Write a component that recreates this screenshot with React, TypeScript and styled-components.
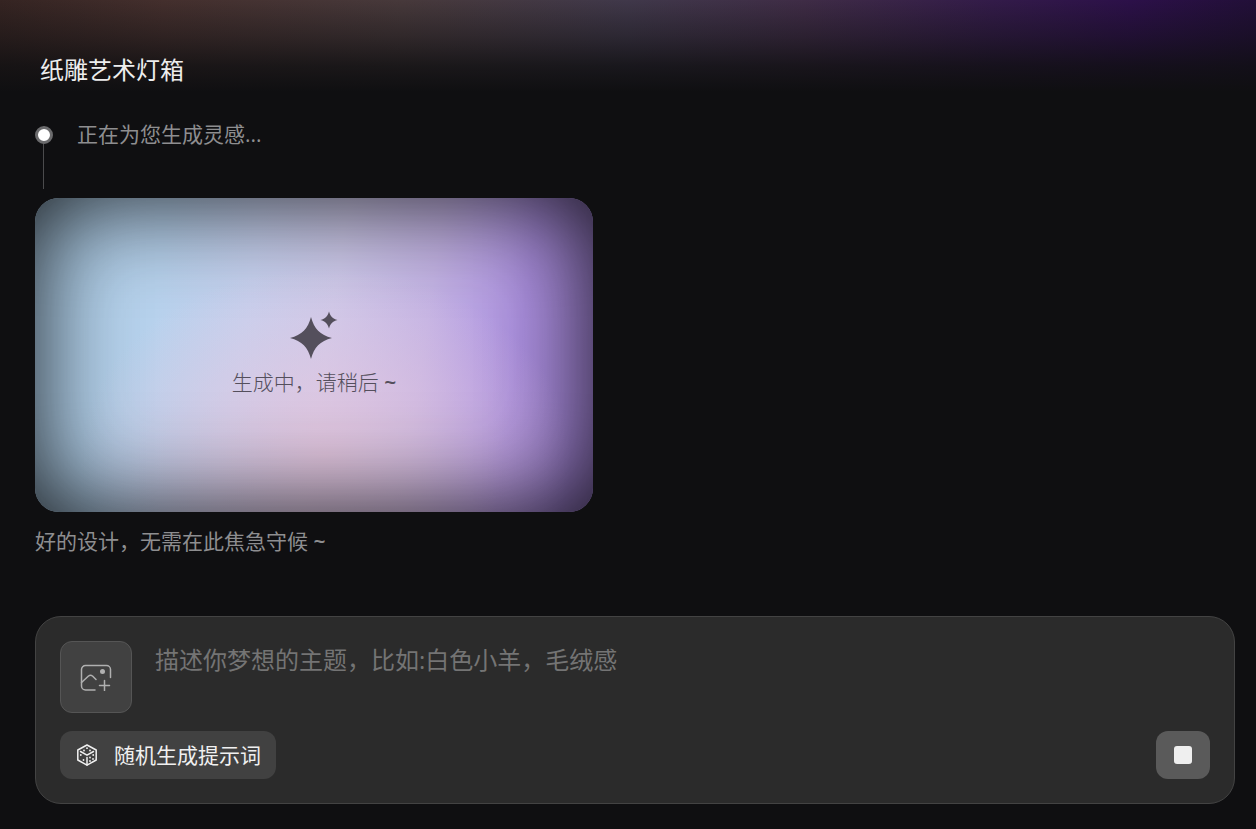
import React from "react";
import styled, { createGlobalStyle } from "styled-components";

const GlobalStyle = createGlobalStyle`
  *, *::before, *::after { box-sizing: border-box; }
  body {
    margin: 0;
    background: #0f0f11;
    font-family: "Open Sans", "Noto Sans CJK SC", sans-serif;
  }
  button, textarea { font-family: inherit; }
`;

const Page = styled.main`
  display: flex;
  flex-direction: column;
  min-height: 100vh;
  padding: 50px 21px 25px 35px;
  background:
    linear-gradient(to bottom, rgba(15, 15, 17, 0) 0, rgba(15, 15, 17, 0.4) 36px, rgba(15, 15, 17, 0.8) 66px, #0f0f11 92px),
    linear-gradient(to right, #352422 0%, #442f2d 13%, #47393b 32%, #40384a 50%, #3f2c46 64%, #331b49 79%, #2c1049 90%, #220f38 100%);
`;

const Title = styled.h1`
  margin: 0;
  padding-left: 5px;
  font-size: 24px;
  line-height: 40px;
  font-weight: 400;
  color: #ededed;
`;

const Status = styled.div`
  display: grid;
  grid-template-columns: 18px 1fr;
  column-gap: 24px;
  margin-top: 28px;
`;

const Track = styled.div`
  display: flex;
  flex-direction: column;
  padding-top: 8px;
`;

const Dot = styled.span`
  width: 18px;
  height: 18px;
  flex: none;
  border: 3px solid #6b6b6d;
  border-radius: 50%;
  background: #fff;
`;

const Line = styled.span`
  width: 1px;
  height: 45px;
  margin-left: 8px;
  background: #4b4b4d;
`;

const Note = styled.p`
  margin: 0;
  font-size: 21px;
  line-height: 32px;
  color: #8e8e90;
`;

const Preview = styled.section`
  display: flex;
  flex-direction: column;
  align-items: center;
  gap: 6px;
  width: 100%;
  max-width: 558px;
  height: 314px;
  margin: 9px 0 13px;
  padding-top: 112px;
  border-radius: 24px;
  color: #544f5c;
  background:
    radial-gradient(ellipse 44% 60% at 52% 82%, rgba(228, 198, 222, 0.9), rgba(226, 202, 228, 0) 100%),
    linear-gradient(98deg, #b2d2ec 8%, #b7d2ed 22%, #c6d0ee 38%, #cdc9ea 52%, #c3b3e4 68%, #ac90e0 84%, #a283d6 100%);
  box-shadow: inset 0 0 100px rgba(0, 0, 0, 0.9);
`;

const PreviewText = styled.p`
  margin: 0;
  font-size: 21px;
  line-height: 32px;
  font-weight: 300;
`;

const Tilde = styled.span`
  font-weight: 600;
`;

const Composer = styled.form`
  display: flex;
  flex-direction: column;
  gap: 18px;
  margin-top: 59px;
  padding: 24px;
  border: 1px solid #434343;
  border-radius: 26px;
  background: #2b2b2b;
`;

const Row = styled.div<{ $between?: boolean }>`
  display: flex;
  gap: 23px;
  justify-content: ${(p) => (p.$between ? "space-between" : "flex-start")};
`;

const UploadButton = styled.button`
  display: flex;
  align-items: center;
  justify-content: center;
  flex: none;
  width: 72px;
  height: 72px;
  padding: 0;
  border: 1px solid #555;
  border-radius: 12px;
  background: #414141;
  color: #b0b0b0;
`;

const Prompt = styled.textarea`
  flex: 1;
  height: 72px;
  padding: 0;
  border: 0;
  outline: 0;
  resize: none;
  background: transparent;
  color: #ededed;
  font-size: 24px;
  line-height: 38px;
  &::placeholder { color: #747474; opacity: 1; }
`;

const RandomButton = styled.button`
  display: flex;
  align-items: center;
  gap: 15px;
  height: 48px;
  padding: 0 15px;
  border: 0;
  border-radius: 12px;
  background: #414141;
  color: #f0f0f0;
  font-size: 21px;
  line-height: 32px;
`;

const StopButton = styled.button`
  display: flex;
  align-items: center;
  justify-content: center;
  width: 54px;
  height: 48px;
  padding: 0;
  border: 0;
  border-radius: 12px;
  background: #5a5a5a;
`;

const StopMark = styled.span`
  width: 18px;
  height: 18px;
  border-radius: 3px;
  background: #efefef;
`;

const Sparkles = () => (
  <svg width="50" height="50" viewBox="0 0 50 50" fill="currentColor" aria-hidden="true">
    <path d="M22 7C25 18.500 31 25 43 28C31 31 25 37.500 22 49C19 37.500 13 31 1 28C13 25 19 18.500 22 7Z" />
    <path d="M40 1.500C41.500 6.500 43.500 8.500 48.500 10C43.500 11.500 41.500 13.500 40 18.500C38.500 13.500 36.500 11.500 31.500 10C36.500 8.500 38.500 6.500 40 1.500Z" />
  </svg>
);

const ImagePlus = () => (
  <svg width="32" height="28" viewBox="0 0 32 28" fill="none" stroke="currentColor" strokeWidth="1.500" strokeLinecap="round" strokeLinejoin="round" aria-hidden="true">
    <path d="M15 27H5.500A4 4 0 0 1 1.500 23V6.500A4 4 0 0 1 5.500 2.500H26.500A4 4 0 0 1 30.500 6.500V14.500" />
    <path d="M1.500 19.500L8.500 13Q10.500 11.500 12.500 13L16 16.500" />
    <path d="M24.500 17.500V27.500M19.500 22.500H29.500" />
    <circle cx="22.500" cy="8.500" r="2.500" fill="currentColor" stroke="none" />
  </svg>
);

const Dice = () => (
  <svg width="24" height="24" viewBox="0 0 24 24" fill="none" stroke="currentColor" strokeWidth="1.500" strokeLinejoin="round" strokeLinecap="round" aria-hidden="true">
    <path d="M12 2L21.200 7V17L12 22.200L2.800 17V7Z" />
    <path d="M5.500 8.500L12 12.200L18.500 8.500M12 14.500V22" />
    <g fill="currentColor" stroke="none">
      <circle cx="12" cy="5.200" r="0.900" />
      <circle cx="9" cy="7.500" r="0.900" />
      <circle cx="15" cy="7.500" r="0.900" />
      <circle cx="5.800" cy="12" r="0.900" />
      <circle cx="8.500" cy="17" r="0.900" />
      <circle cx="18.200" cy="12" r="0.900" />
      <circle cx="15" cy="14.500" r="0.900" />
      <circle cx="18" cy="16" r="0.900" />
      <circle cx="15" cy="18" r="0.900" />
    </g>
  </svg>
);

export default function App() {
  return (
    <>
      <GlobalStyle />
      <Page>
        <Title>纸雕艺术灯箱</Title>
        <Status>
          <Track>
            <Dot />
            <Line />
          </Track>
          <Note>正在为您生成灵感...</Note>
        </Status>
        <Preview>
          <Sparkles />
          <PreviewText>
            生成中，请稍后 <Tilde>~</Tilde>
          </PreviewText>
        </Preview>
        <Note>
          好的设计，无需在此焦急守候 <Tilde>~</Tilde>
        </Note>
        <Composer onSubmit={(e: React.FormEvent) => e.preventDefault()}>
          <Row>
            <UploadButton type="button" aria-label="上传图片">
              <ImagePlus />
            </UploadButton>
            <Prompt aria-label="主题描述" placeholder="描述你梦想的主题，比如:白色小羊，毛绒感" />
          </Row>
          <Row $between>
            <RandomButton type="button">
              <Dice />
              随机生成提示词
            </RandomButton>
            <StopButton type="button" aria-label="停止">
              <StopMark />
            </StopButton>
          </Row>
        </Composer>
      </Page>
    </>
  );
}
